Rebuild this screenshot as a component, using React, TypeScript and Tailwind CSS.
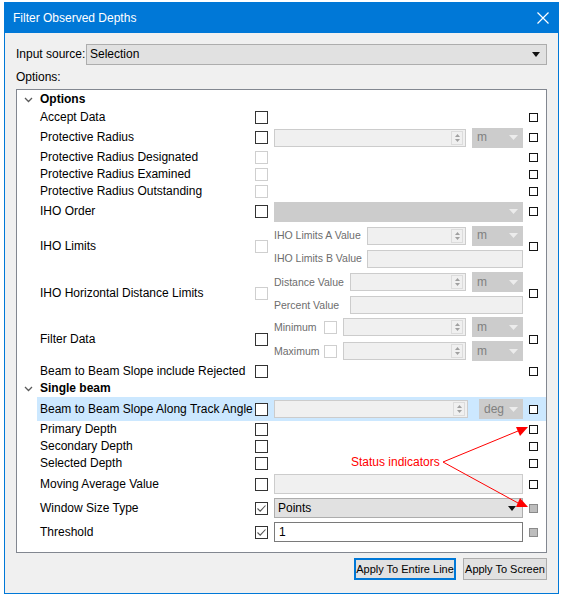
import type { ReactNode } from 'react'

const font = { fontFamily: '"Liberation Sans", Arial, sans-serif' }

function Check({ enabled = true, checked = false }: { enabled?: boolean; checked?: boolean }) {
  return (
    <span
      className={
        enabled
          ? 'flex h-[13px] w-[13px] shrink-0 items-center justify-center border border-[#333333] bg-white'
          : 'flex h-[13px] w-[13px] shrink-0 items-center justify-center border border-[#cfcfcf] bg-white'
      }
    >
      {checked ? (
        <svg width="11" height="11" viewBox="0 0 11 11">
          <path d="M1.5 5.5 L4.2 8.2 L9.5 2.5" fill="none" stroke="#555" strokeWidth="1.1" />
        </svg>
      ) : null}
    </span>
  )
}

function Status({ filled = false }: { filled?: boolean }) {
  return (
    <span
      className={
        filled
          ? 'h-[9px] w-[9px] shrink-0 border border-[#8a8a8a] bg-[#bdbdbd]'
          : 'h-[9px] w-[9px] shrink-0 border-[1.5px] border-[#151515] bg-white'
      }
    />
  )
}

function SpinArrows() {
  return (
    <span className="flex h-[14px] w-[12px] flex-col items-center justify-center gap-[2px] border border-[#dcdcdc]">
      <svg width="5" height="3" viewBox="0 0 5 3">
        <path d="M0 3 L2.5 0 L5 3 Z" fill="#a0a0a0" />
      </svg>
      <svg width="5" height="3" viewBox="0 0 5 3">
        <path d="M0 0 L2.5 3 L5 0 Z" fill="#a0a0a0" />
      </svg>
    </span>
  )
}

function Spin({ w }: { w: string }) {
  return (
    <span className={`flex h-[18px] ${w} shrink-0 items-center justify-end border border-[#cccccc] bg-[#f0f0f0] pr-[2px]`}>
      <SpinArrows />
    </span>
  )
}

function Unit({ label = 'm', w = 'w-[51px]' }: { label?: string; w?: string }) {
  return (
    <span className={`flex h-[20px] ${w} shrink-0 items-center justify-between bg-[#cccccc] pl-[5px] pr-[5px] text-[12px] text-[#808080]`}>
      {label}
      <svg width="9" height="5" viewBox="0 0 9 5">
        <path d="M0 0 L9 0 L4.5 5 Z" fill="#ececec" />
      </svg>
    </span>
  )
}

function TextBox() {
  return <span className="h-[18px] flex-1 border border-[#cccccc] bg-[#f0f0f0]" />
}

function Row({
  label,
  h,
  check,
  status,
  children,
  highlight = false,
}: {
  label: string
  h: string
  check: ReactNode
  status: ReactNode
  children?: ReactNode
  highlight?: boolean
}) {
  return (
    <div className={`ml-[20px] flex ${h} items-center pl-[3px] pr-[7px] ${highlight ? 'bg-[#cce8ff]' : ''}`}>
      <span className="w-[215px] shrink-0 whitespace-nowrap text-[12px] text-black">{label}</span>
      {check}
      <div className="ml-[6px] flex w-[249px] shrink-0 items-center">{children}</div>
      <span className="ml-[6px] flex">{status}</span>
    </div>
  )
}

function Group({ label, h }: { label: string; h: string }) {
  return (
    <div className={`flex ${h} items-center pl-[7px]`}>
      <svg width="9" height="6" viewBox="0 0 9 6" className="shrink-0">
        <path d="M1 1 L4.5 4.5 L8 1" fill="none" stroke="#5a5a5a" strokeWidth="1.3" />
      </svg>
      <span className="ml-[7px] text-[12px] font-bold text-black">{label}</span>
    </div>
  )
}

function Sub({ children, w }: { children: ReactNode; w: string }) {
  return <span className={`${w} shrink-0 whitespace-nowrap text-[10.5px] text-[#6d6d6d]`}>{children}</span>
}

export default function App() {
  return (
    <div className="relative h-[597px] w-[563px] bg-white text-[12px] leading-[15px]" style={font}>
      <div className="absolute left-[4px] top-[2px] flex h-[592px] w-[555px] flex-col border border-[#0078d7] bg-[#f0f0f0]">
        <div className="flex h-[30px] shrink-0 items-center justify-between bg-[#0078d7] pl-[8px] pr-[9px]">
          <span className="text-[12px] text-white">Filter Observed Depths</span>
          <svg width="12" height="12" viewBox="0 0 12 12">
            <path d="M0.5 0.5 L11.5 11.5 M11.5 0.5 L0.5 11.5" stroke="white" strokeWidth="1.2" />
          </svg>
        </div>

        <div className="flex flex-1 flex-col pl-[11px] pr-[11px]">
          <div className="mt-[11px] flex h-[21px] items-center">
            <span className="w-[70px] shrink-0 whitespace-nowrap text-[12px] text-black">Input source:</span>
            <div className="flex h-[21px] flex-1 items-center justify-between border border-[#adadad] bg-[#e1e1e1] pl-[3px] pr-[6px]">
              <span className="text-[12px] text-black">Selection</span>
              <svg width="8" height="5" viewBox="0 0 8 5">
                <path d="M0 0 L8 0 L4 5 Z" fill="#111" />
              </svg>
            </div>
          </div>
          <span className="mt-[2px] h-[20px] text-[12px] leading-[20px] text-black">Options:</span>

          <div className="mt-[2px] flex h-[464px] flex-col border border-[#828790] bg-white pt-[1px]">
            <Group label="Options" h="h-[17px]" />
            <Row label="Accept Data" h="h-[19px]" check={<Check />} status={<Status />} />
            <Row label="Protective Radius" h="h-[21px]" check={<Check />} status={<Status />}>
              <Spin w="w-[192px]" />
              <span className="ml-[6px] flex">
                <Unit />
              </span>
            </Row>
            <Row label="Protective Radius Designated" h="h-[18px]" check={<Check enabled={false} />} status={<Status />} />
            <Row label="Protective Radius Examined" h="h-[17px]" check={<Check enabled={false} />} status={<Status />} />
            <Row label="Protective Radius Outstanding" h="h-[17px]" check={<Check enabled={false} />} status={<Status />} />
            <Row label="IHO Order" h="h-[23px]" check={<Check />} status={<Status />}>
              <span className="flex h-[20px] flex-1 items-center justify-end bg-[#cccccc] pr-[5px]">
                <svg width="9" height="5" viewBox="0 0 9 5">
                  <path d="M0 0 L9 0 L4.5 5 Z" fill="#ececec" />
                </svg>
              </span>
            </Row>
            <Row label="IHO Limits" h="h-[47px]" check={<Check enabled={false} />} status={<Status />}>
              <div className="flex flex-1 flex-col gap-[4px]">
                <div className="flex items-center">
                  <Sub w="w-[93px]">IHO Limits A Value</Sub>
                  <Spin w="w-[99px]" />
                  <span className="ml-[6px] flex">
                    <Unit />
                  </span>
                </div>
                <div className="flex items-center">
                  <Sub w="w-[93px]">IHO Limits B Value</Sub>
                  <TextBox />
                </div>
              </div>
            </Row>
            <Row label="IHO Horizontal Distance Limits" h="h-[46px]" check={<Check enabled={false} />} status={<Status />}>
              <div className="flex flex-1 flex-col gap-[4px]">
                <div className="flex items-center">
                  <Sub w="w-[76px]">Distance Value</Sub>
                  <Spin w="w-[116px]" />
                  <span className="ml-[6px] flex">
                    <Unit />
                  </span>
                </div>
                <div className="flex items-center">
                  <Sub w="w-[76px]">Percent Value</Sub>
                  <TextBox />
                </div>
              </div>
            </Row>
            <Row label="Filter Data" h="h-[46px]" check={<Check />} status={<Status />}>
              <div className="flex flex-1 flex-col gap-[4px]">
                {['Minimum', 'Maximum'].map((name) => (
                  <div key={name} className="flex items-center">
                    <Sub w="w-[50px]">{name}</Sub>
                    <Check enabled={false} />
                    <span className="ml-[6px] flex">
                      <Spin w="w-[123px]" />
                    </span>
                    <span className="ml-[6px] flex">
                      <Unit />
                    </span>
                  </div>
                ))}
              </div>
            </Row>
            <Row label="Beam to Beam Slope include Rejected" h="h-[18px]" check={<Check />} status={<Status />} />
            <Group label="Single beam" h="h-[17px]" />
            <Row label="Beam to Beam Slope Along Track Angle" h="h-[24px]" highlight check={<Check />} status={<Status />}>
              <Spin w="w-[194px]" />
              <span className="ml-[11px] flex">
                <Unit label="deg" w="w-[44px]" />
              </span>
            </Row>
            <Row label="Primary Depth" h="h-[17px]" check={<Check />} status={<Status />} />
            <Row label="Secondary Depth" h="h-[17px]" check={<Check />} status={<Status />} />
            <Row label="Selected Depth" h="h-[17px]" check={<Check />} status={<Status />} />
            <Row label="Moving Average Value" h="h-[24px]" check={<Check />} status={<Status />}>
              <span className="h-[20px] flex-1 border border-[#cccccc] bg-[#f0f0f0]" />
            </Row>
            <Row label="Window Size Type" h="h-[24px]" check={<Check checked />} status={<Status filled />}>
              <span className="flex h-[20px] flex-1 items-center justify-between border border-[#adadad] bg-[#e1e1e1] pl-[3px] pr-[6px] text-[12px] text-black">
                Points
                <svg width="8" height="5" viewBox="0 0 8 5">
                  <path d="M0 0 L8 0 L4 5 Z" fill="#111" />
                </svg>
              </span>
            </Row>
            <Row label="Threshold" h="h-[24px]" check={<Check checked />} status={<Status filled />}>
              <span className="flex h-[20px] flex-1 items-center border border-[#7a7a7a] bg-white pl-[4px] text-[12px] text-black">
                1
              </span>
            </Row>
          </div>

          <div className="mt-[5px] flex justify-end gap-[7px]">
            <button
              type="button"
              className="h-[22px] w-[102px] whitespace-nowrap border-2 border-[#0078d7] bg-[#e1e1e1] text-[11px] text-black"
            >
              Apply To Entire Line
            </button>
            <button
              type="button"
              className="h-[22px] w-[84px] whitespace-nowrap border border-[#adadad] bg-[#e1e1e1] text-[11px] text-black"
            >
              Apply To Screen
            </button>
          </div>
        </div>
      </div>

      <span className="absolute left-[351px] top-[455px] text-[12px] text-[#ff0000]">Status indicators</span>
      <svg className="absolute left-0 top-0" width="563" height="597" viewBox="0 0 563 597">
        <path d="M443 462 L518 431 M443 462 L518 503" stroke="#ff0000" strokeWidth="1" fill="none" />
        <path d="M528 427 L516 427 L520 436 Z" fill="#ff0000" />
        <path d="M528 507 L520 498 L516 507 Z" fill="#ff0000" />
      </svg>
    </div>
  )
}
